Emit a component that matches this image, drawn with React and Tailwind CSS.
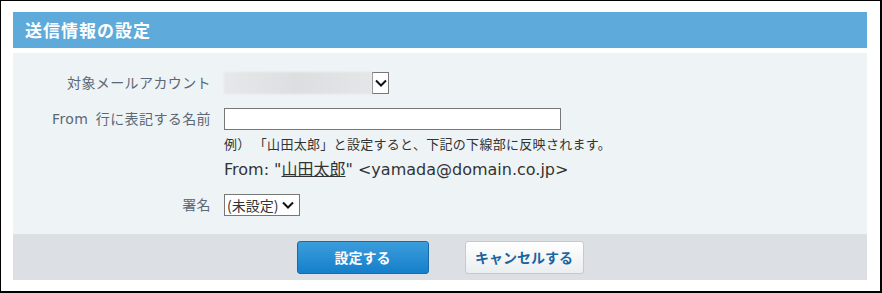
import React from 'react';

const font = { fontFamily: '"Noto Sans CJK JP", "Liberation Sans", sans-serif' };
const latin = { fontFamily: '"DejaVu Sans", "Noto Sans CJK JP", sans-serif' };

function Chevron() {
  return (
    <svg width="12" height="8" viewBox="0 0 12 8" className="block">
      <path d="M1 1.5 L6 6.5 L11 1.5" fill="none" stroke="#111" strokeWidth="2" />
    </svg>
  );
}

export default function App() {
  return (
    <div
      className="w-[882px] h-[293px] bg-white border-l border-t border-r-2 border-b-2 border-black pl-3 pr-[13px] pt-[11px] flex flex-col"
      style={font}
    >
      {/* Header */}
      <div className="h-[36px] bg-[#5eaadb] flex items-center pl-3 text-white font-bold text-[17px] tracking-[1px]">
        送信情報の設定
      </div>

      {/* Body */}
      <div className="mt-[5px] bg-[#eef3f6] h-[181px] pt-[19px] text-[14px] text-[#5b6875]">
        <div className="grid grid-cols-[198px_1fr] gap-x-[13px] items-center">
          <div className="text-right h-[22px] leading-[20px] tracking-[0.4px]">対象メールアカウント</div>
          <div className="flex h-[22px]">
            <div className="w-[148px] h-[22px] bg-gradient-to-r from-[#e6e8e9] via-[#dcdedf] to-[#e4e6e7] blur-[1px]"></div>
            <div className="w-[17px] h-[22px] border border-[#777] bg-white flex items-center justify-center">
              <Chevron />
            </div>
          </div>

          <div className="text-right mt-[14px] h-[22px] leading-[20px] tracking-[0.4px]">
            <span style={latin} className="mr-[4px]">From</span> 行に表記する名前
          </div>
          <div className="mt-[14px]">
            <div className="w-[337px] h-[22px] border border-[#777] bg-white"></div>
          </div>

          <div></div>
          <div className="mt-[5px] text-[13px] leading-[18px] tracking-[0.3px] text-[#333]">
            例） 「山田太郎」と設定すると、下記の下線部に反映されます。
          </div>

          <div></div>
          <div className="mt-[4px] text-[16px] leading-[22px] text-[#333]" style={latin}>
            From: "<span className="underline" style={font}>山田太郎</span>" &lt;yamada@domain.co.jp&gt;
          </div>

          <div className="text-right mt-[13px] h-[22px] leading-[20px] tracking-[0.4px]">署名</div>
          <div className="mt-[13px]">
            <div className="w-[76px] h-[22px] border border-[#777] bg-white flex items-center pl-[2px] gap-[4px] text-[#333] text-[14px]">
              <span className="leading-[20px]">(未設定)</span>
              <Chevron />
            </div>
          </div>
        </div>
      </div>

      {/* Footer */}
      <div className="h-[46px] bg-[#dce0e4] flex items-center justify-center gap-[36px]">
        <button className="w-[132px] h-[33px] rounded-[3px] border border-[#1a6aa8] bg-gradient-to-b from-[#3a9ddc] to-[#147fca] text-white font-bold text-[14px]">
          設定する
        </button>
        <button className="w-[119px] h-[33px] rounded-[3px] border border-[#c3cbd0] bg-gradient-to-b from-white to-[#ebeeef] text-[#1a64a0] font-bold text-[14px]">
          キャンセルする
        </button>
      </div>
    </div>
  );
}
